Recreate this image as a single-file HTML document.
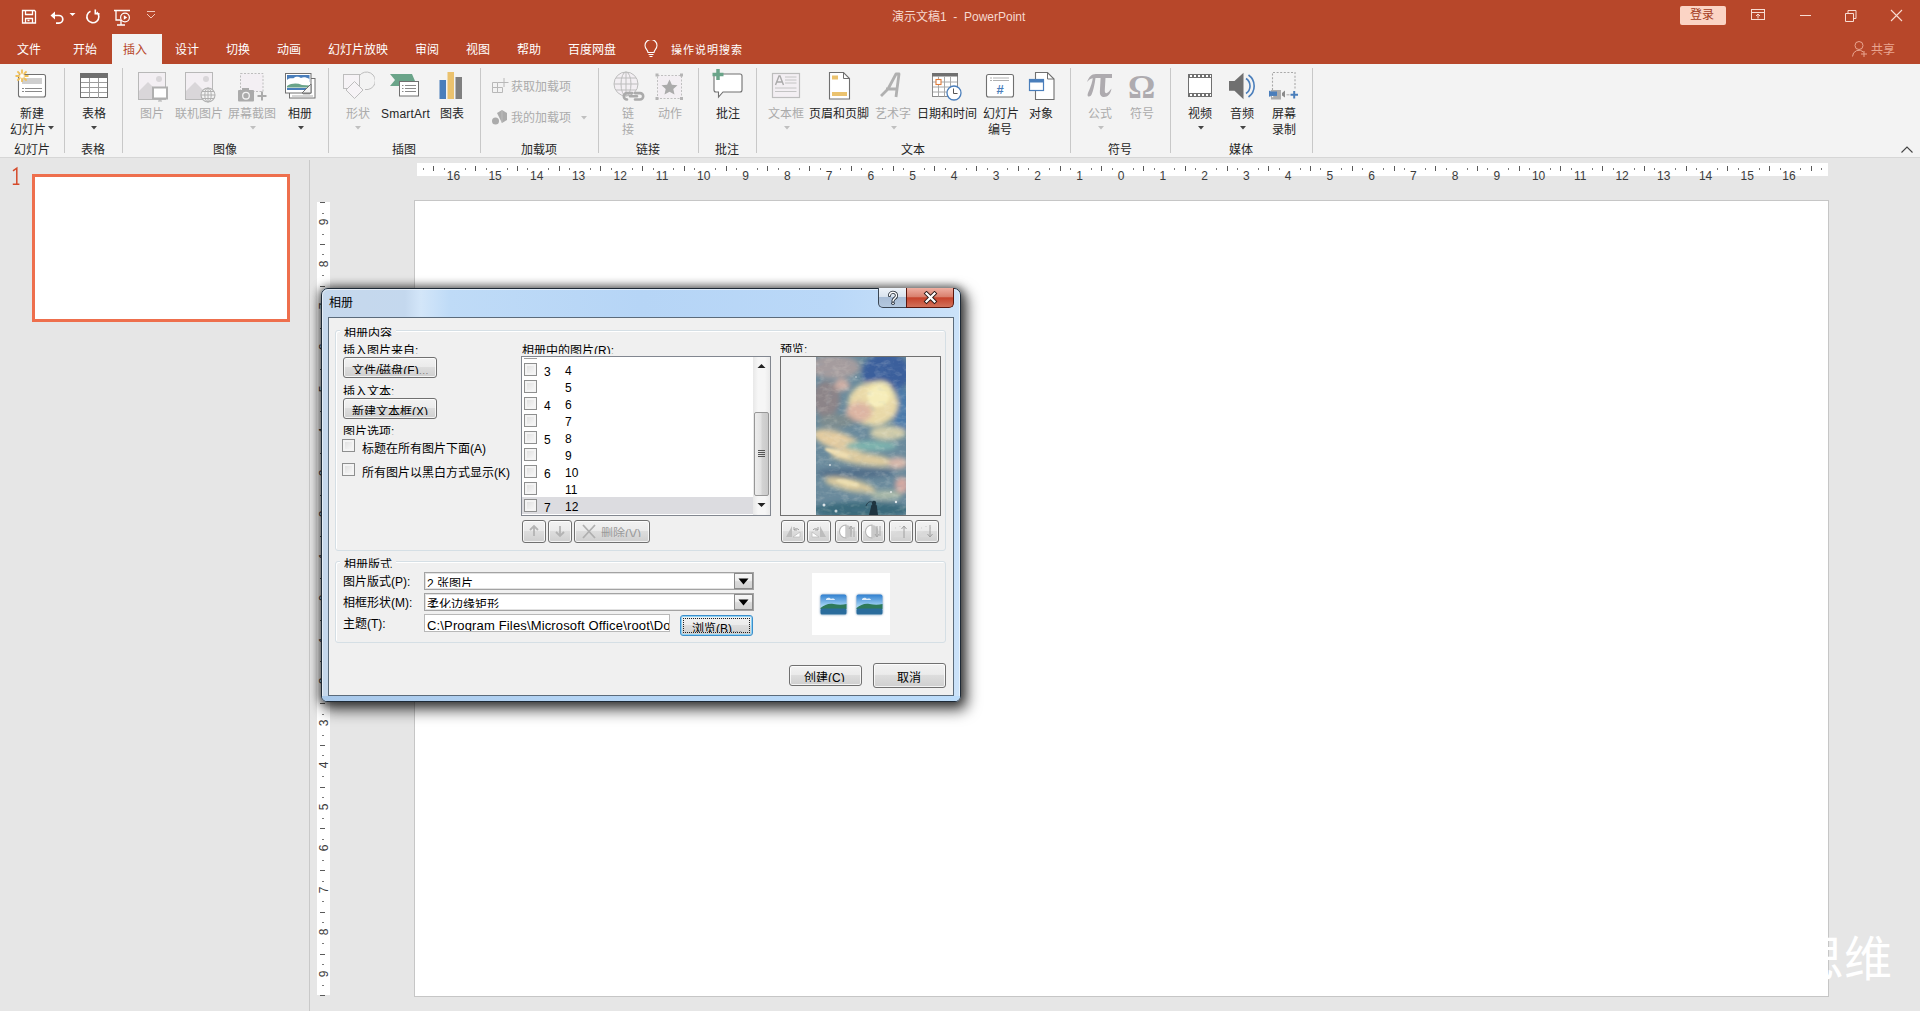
<!DOCTYPE html><html lang="zh-CN"><head><meta charset="utf-8"><style>
html,body{margin:0;padding:0;width:1920px;height:1011px;overflow:hidden;background:#E6E6E6;font-family:"Liberation Sans",sans-serif}
.t{position:absolute;white-space:nowrap}
.r{position:absolute;box-sizing:border-box}
</style></head><body>
<div class="r" style="left:0px;top:0px;width:1920px;height:64px;background:#B7472A"></div>
<svg class="r" style="left:20px;top:8px;" width="18" height="18" viewBox="0 0 18 18"><path d="M2.5 2.5h12l1 1v11.5h-13z M5.5 2.5v4h7v-4 M5.5 15v-4.5h7v4.5 M7.5 12.5h2" fill="none" stroke="#fff" stroke-width="1.3"/></svg>
<svg class="r" style="left:49px;top:8px;" width="18" height="18" viewBox="0 0 18 18"><path d="M5 7.5h5a3.8 3.8 0 0 1 0 7.6h-3" fill="none" stroke="#fff" stroke-width="1.7"/><path d="M1.5 7.5l4.5-4v8z" fill="#fff"/></svg>
<svg class="r" style="left:69px;top:12px;" width="8" height="6" viewBox="0 0 8 6"><path d="M0.5 1h6l-3 3z" fill="#fff"/></svg>
<svg class="r" style="left:84px;top:8px;" width="18" height="18" viewBox="0 0 18 18"><path d="M6.5 3.2A6 6 0 1 0 12.8 4.2" fill="none" stroke="#fff" stroke-width="1.6"/><path d="M11.3 1.6v4.2h4.2" fill="none" stroke="#fff" stroke-width="1.6"/></svg>
<svg class="r" style="left:112px;top:8px;" width="20" height="19" viewBox="0 0 20 19"><path d="M2 2.5h16 M4 2.5v9.5h4.5 M9 12v4.5 M5 17h8" fill="none" stroke="#fff" stroke-width="1.3"/><circle cx="13" cy="9.5" r="4.4" fill="#B7472A" stroke="#fff" stroke-width="1.2"/><path d="M11.8 7.2v4.6l3.4-2.3z" fill="#fff"/></svg>
<svg class="r" style="left:145px;top:10px;" width="12" height="10" viewBox="0 0 12 10"><path d="M2 1.5h8 M2 4l4 4 4-4" fill="none" stroke="#F0C8BC" stroke-width="1"/></svg>
<div class="t " style="left:892px;top:11px;font-size:12px;line-height:12px;color:#F6D9CF;">演示文稿1&nbsp;&nbsp;-&nbsp;&nbsp;PowerPoint</div>
<div class="r" style="left:1680px;top:6px;width:46px;height:19px;background:#FBD4C5;border-radius:2px"></div>
<div class="t " style="left:1690px;top:9px;font-size:12px;line-height:12px;color:#A33B22;">登录</div>
<svg class="r" style="left:1750px;top:8px;" width="17" height="14" viewBox="0 0 17 14"><rect x="1.5" y="1.5" width="13" height="10" fill="none" stroke="#F8DCD2" stroke-width="1"/><path d="M1.5 4.5h13 M8 10.5v-4 M6 8l2-2 2 2" fill="none" stroke="#F8DCD2" stroke-width="1"/></svg>
<div class="r" style="left:1800px;top:15px;width:11px;height:1px;background:#F8DCD2"></div>
<svg class="r" style="left:1844px;top:9px;" width="14" height="13" viewBox="0 0 14 13"><path d="M1.5 4.5h8v8h-8z M4 4.5v-3h8v8h-2.5" fill="none" stroke="#F8DCD2" stroke-width="1"/></svg>
<svg class="r" style="left:1890px;top:9px;" width="13" height="13" viewBox="0 0 13 13"><path d="M1 1l11 11 M12 1l-11 11" fill="none" stroke="#F8DCD2" stroke-width="1.1"/></svg>
<svg class="r" style="left:1851px;top:40px;" width="18" height="18" viewBox="0 0 18 18"><circle cx="8" cy="5.5" r="4" fill="none" stroke="#E9A590" stroke-width="1"/><path d="M1.5 16.5a6.5 6.5 0 0 1 11-4.5 M13 11v6 M10 14h6" fill="none" stroke="#E9A590" stroke-width="1"/></svg>
<div class="t " style="left:1871px;top:44px;font-size:12px;line-height:12px;color:#E9A590;">共享</div>
<div class="r" style="left:112px;top:34px;width:50px;height:30px;background:#F3F3F3"></div>
<div class="t " style="left:17px;top:44px;font-size:12px;line-height:12px;color:#FFFFFF;">文件</div>
<div class="t " style="left:73px;top:44px;font-size:12px;line-height:12px;color:#FFFFFF;">开始</div>
<div class="t " style="left:175px;top:44px;font-size:12px;line-height:12px;color:#FFFFFF;">设计</div>
<div class="t " style="left:226px;top:44px;font-size:12px;line-height:12px;color:#FFFFFF;">切换</div>
<div class="t " style="left:277px;top:44px;font-size:12px;line-height:12px;color:#FFFFFF;">动画</div>
<div class="t " style="left:328px;top:44px;font-size:12px;line-height:12px;color:#FFFFFF;">幻灯片放映</div>
<div class="t " style="left:415px;top:44px;font-size:12px;line-height:12px;color:#FFFFFF;">审阅</div>
<div class="t " style="left:466px;top:44px;font-size:12px;line-height:12px;color:#FFFFFF;">视图</div>
<div class="t " style="left:517px;top:44px;font-size:12px;line-height:12px;color:#FFFFFF;">帮助</div>
<div class="t " style="left:568px;top:44px;font-size:12px;line-height:12px;color:#FFFFFF;">百度网盘</div>
<div class="t " style="left:123px;top:44px;font-size:12px;line-height:12px;color:#B7472A;">插入</div>
<svg class="r" style="left:643px;top:40px;" width="16" height="18" viewBox="0 0 16 18"><path d="M5 12.5c0-2.5-3-3.5-3-7a6 6 0 0 1 12 0c0 3.5-3 4.5-3 7z M5.5 14.5h5 M6.5 16.5h3" fill="none" stroke="#fff" stroke-width="1.1"/></svg>
<div class="t " style="left:671px;top:45px;font-size:11px;line-height:11px;color:#FFFFFF;letter-spacing:1px">操作说明搜索</div>
<div class="r" style="left:0px;top:64px;width:1920px;height:93px;background:#F3F3F3"></div>
<div class="r" style="left:0px;top:157px;width:1920px;height:1px;background:#D6D6D6"></div>
<div class="r" style="left:64px;top:68px;width:1px;height:85px;background:#C8C8C8"></div>
<div class="r" style="left:122px;top:68px;width:1px;height:85px;background:#C8C8C8"></div>
<div class="r" style="left:328px;top:68px;width:1px;height:85px;background:#C8C8C8"></div>
<div class="r" style="left:480px;top:68px;width:1px;height:85px;background:#C8C8C8"></div>
<div class="r" style="left:598px;top:68px;width:1px;height:85px;background:#C8C8C8"></div>
<div class="r" style="left:698px;top:68px;width:1px;height:85px;background:#C8C8C8"></div>
<div class="r" style="left:756px;top:68px;width:1px;height:85px;background:#C8C8C8"></div>
<div class="r" style="left:1070px;top:68px;width:1px;height:85px;background:#C8C8C8"></div>
<div class="r" style="left:1170px;top:68px;width:1px;height:85px;background:#C8C8C8"></div>
<div class="r" style="left:1312px;top:68px;width:1px;height:85px;background:#C8C8C8"></div>
<div class="t" style="left:-68.0px;width:200px;text-align:center;top:144px;font-size:12px;line-height:12px;color:#262626;">幻灯片</div>
<div class="t" style="left:-7.0px;width:200px;text-align:center;top:144px;font-size:12px;line-height:12px;color:#262626;">表格</div>
<div class="t" style="left:125.0px;width:200px;text-align:center;top:144px;font-size:12px;line-height:12px;color:#262626;">图像</div>
<div class="t" style="left:304.0px;width:200px;text-align:center;top:144px;font-size:12px;line-height:12px;color:#262626;">插图</div>
<div class="t" style="left:439.0px;width:200px;text-align:center;top:144px;font-size:12px;line-height:12px;color:#262626;">加载项</div>
<div class="t" style="left:548.0px;width:200px;text-align:center;top:144px;font-size:12px;line-height:12px;color:#262626;">链接</div>
<div class="t" style="left:627.0px;width:200px;text-align:center;top:144px;font-size:12px;line-height:12px;color:#262626;">批注</div>
<div class="t" style="left:813.0px;width:200px;text-align:center;top:144px;font-size:12px;line-height:12px;color:#262626;">文本</div>
<div class="t" style="left:1020.0px;width:200px;text-align:center;top:144px;font-size:12px;line-height:12px;color:#262626;">符号</div>
<div class="t" style="left:1141.0px;width:200px;text-align:center;top:144px;font-size:12px;line-height:12px;color:#262626;">媒体</div>
<svg class="r" style="left:1900px;top:145px;" width="14" height="9" viewBox="0 0 14 9"><path d="M1.5 7.5l5.5-5.5 5.5 5.5" fill="none" stroke="#444" stroke-width="1.1"/></svg>
<svg class="r" style="left:14px;top:68px;" width="34" height="32" viewBox="0 0 34 32">
<rect x="4.5" y="6.5" width="27" height="22.5" rx="2" fill="#fff" stroke="#707070" stroke-width="1.1"/>
<rect x="8" y="10" width="20" height="6" fill="#CFCFCF"/>
<path d="M8 20.5h2 M11 20.5h17 M8 23.5h2 M11 23.5h17" stroke="#8A8A8A" stroke-width="1"/>
<g stroke="#F0C05A" stroke-width="1.8"><path d="M8 1.5v4 M8 10v4 M1.5 8h4 M10.5 8h4 M3.4 3.4l2.6 2.6 M10 10l2.6 2.6 M12.6 3.4l-2.6 2.6 M6 10l-2.6 2.6"/></g>
<circle cx="8" cy="8" r="2.4" fill="#fff" stroke="#F0C05A" stroke-width="0.6"/>
</svg>
<div class="t " style="left:20px;top:108px;font-size:12px;line-height:12px;color:#262626;">新建</div>
<div class="t " style="left:10px;top:124px;font-size:12px;line-height:12px;color:#262626;">幻灯片</div>
<svg class="r" style="left:48px;top:126px;" width="6" height="4" viewBox="0 0 6 4"><path d="M0 0h6l-3 3.5z" fill="#444"/></svg>
<svg class="r" style="left:79px;top:72px;" width="30" height="28" viewBox="0 0 30 28">
<rect x="1.5" y="1.5" width="27" height="24" fill="#fff" stroke="#6F6F6F" stroke-width="1"/>
<rect x="1" y="1" width="28" height="5" fill="#6F6F6F"/>
<path d="M10.5 6v20 M19.5 6v20 M2 10.5h26 M2 15.5h26 M2 20.5h26" stroke="#9C9C9C" stroke-width="1"/>
</svg>
<div class="t " style="left:82px;top:108px;font-size:12px;line-height:12px;color:#262626;">表格</div>
<svg class="r" style="left:91px;top:126px;" width="6" height="4" viewBox="0 0 6 4"><path d="M0 0h6l-3 3.5z" fill="#444"/></svg>
<svg class="r" style="left:136px;top:70px;" width="34" height="34" viewBox="0 0 34 34">
<rect x="2.5" y="2.5" width="27" height="27" fill="#F3EFF3" stroke="#B8B8B8" stroke-width="1"/>
<path d="M3 29v-8l9-9 9 9v8z" fill="#D9D6D9"/>
<circle cx="23" cy="9" r="3" fill="#D9D6D9"/>
<rect x="17" y="17.5" width="14" height="11" fill="#fff" stroke="#B0B0B0" stroke-width="2"/>
<path d="M22 31h4 M24 29v2" stroke="#B0B0B0" stroke-width="1"/>
</svg>
<svg class="r" style="left:183px;top:70px;" width="36" height="34" viewBox="0 0 36 34">
<rect x="2.5" y="2.5" width="27" height="27" fill="#F3EFF3" stroke="#B8B8B8" stroke-width="1"/>
<path d="M3 29v-8l9-9 9 9v8z" fill="#D9D6D9"/>
<circle cx="23" cy="9" r="3" fill="#D9D6D9"/>
<circle cx="25" cy="25" r="7" fill="#F3F3F3" stroke="#B0B0B0" stroke-width="1.1"/>
<path d="M18 25h14 M19 21.5h12 M19 28.5h12 M25 18v14" stroke="#B0B0B0" stroke-width="1"/>
<ellipse cx="25" cy="25" rx="3.2" ry="7" fill="none" stroke="#B0B0B0" stroke-width="1"/>
</svg>
<svg class="r" style="left:236px;top:71px;" width="32" height="32" viewBox="0 0 32 32">
<rect x="4.5" y="2.5" width="22.5" height="18" fill="#F3EFF3" stroke="#BDBDBD" stroke-width="1" stroke-dasharray="2,1.5"/>
<rect x="2" y="19" width="16" height="11.5" rx="1" fill="#ABABAB"/>
<rect x="6" y="17" width="7" height="3" fill="#ABABAB"/>
<circle cx="10" cy="24.7" r="3.3" fill="#ABABAB" stroke="#F3F3F3" stroke-width="1.3"/>
<path d="M21.5 25h9 M26 20.5v9" stroke="#ABABAB" stroke-width="2"/>
</svg>
<svg class="r" style="left:284px;top:72px;" width="33" height="28" viewBox="0 0 33 28">
<rect x="5.5" y="6.5" width="25.5" height="19.5" fill="#fff" stroke="#707070" stroke-width="1"/>
<path d="M8 24h21 M26 22v-10l-7 10z" fill="#ABABAB" stroke="#ABABAB" stroke-width="1"/>
<rect x="1.5" y="1.5" width="25.5" height="19.5" fill="#fff" stroke="#707070" stroke-width="1"/>
<rect x="3" y="3" width="22.5" height="7" fill="#4A7EBB"/>
<path d="M3 8c3-3 5-1 7-2 2-2 5-1 7 0 2-1 5-1 8.5 1v3h-22.5z" fill="#fff"/>
<path d="M3 14c5-3 10-3 15-1l7.5 0.5v2h-22.5z" fill="#6AA489"/>
<rect x="3" y="16" width="22.5" height="2" fill="#4A7EBB"/>
<path d="M18 21l9-9v9z" fill="#F3F3F3" stroke="#707070" stroke-width="1"/>
</svg>
<div class="t " style="left:140px;top:108px;font-size:12px;line-height:12px;color:#ABABAB;">图片</div>
<div class="t " style="left:175px;top:108px;font-size:12px;line-height:12px;color:#ABABAB;">联机图片</div>
<div class="t " style="left:228px;top:108px;font-size:12px;line-height:12px;color:#ABABAB;">屏幕截图</div>
<div class="t " style="left:288px;top:108px;font-size:12px;line-height:12px;color:#262626;">相册</div>
<svg class="r" style="left:250px;top:126px;" width="6" height="4" viewBox="0 0 6 4"><path d="M0 0h6l-3 3.5z" fill="#C0C0C0"/></svg>
<svg class="r" style="left:298px;top:126px;" width="6" height="4" viewBox="0 0 6 4"><path d="M0 0h6l-3 3.5z" fill="#444"/></svg>
<svg class="r" style="left:341px;top:69px;" width="34" height="33" viewBox="0 0 34 33">
<rect x="2.5" y="5.5" width="16" height="14" fill="#F6F3F6" stroke="#BDBDBD" stroke-width="1"/>
<path d="M18.5 6.5A8.8 8.8 0 1 1 24 20.5" fill="none" stroke="#BDBDBD" stroke-width="1"/>
<path d="M13.5 12.5l8.5 8.5-8.5 8.5-8.5-8.5z" fill="#F6F3F6" stroke="#BDBDBD" stroke-width="1"/>
</svg>
<div class="t " style="left:346px;top:108px;font-size:12px;line-height:12px;color:#ABABAB;">形状</div>
<svg class="r" style="left:355px;top:126px;" width="6" height="4" viewBox="0 0 6 4"><path d="M0 0h6l-3 3.5z" fill="#C0C0C0"/></svg>
<svg class="r" style="left:389px;top:73px;" width="33" height="26" viewBox="0 0 33 26">
<path d="M1 1h22l3 7h-4v5h-21l5-6z" fill="#6AA489"/>
<rect x="10.5" y="8.5" width="19" height="14.5" fill="#fff" stroke="#707070" stroke-width="1"/>
<path d="M13 12.5h1.5 M16 12.5h11 M13 15.5h1.5 M16 15.5h11 M13 18.5h1.5 M16 18.5h11" stroke="#8A8A8A" stroke-width="1"/>
</svg>
<div class="t " style="left:381px;top:108px;font-size:12px;line-height:12px;color:#262626;letter-spacing:0.2px">SmartArt</div>
<svg class="r" style="left:439px;top:72px;" width="25" height="28" viewBox="0 0 25 28">
<rect x="0.5" y="8" width="6.5" height="19" fill="#4A7EBB"/>
<rect x="8.5" y="0" width="6.5" height="27" fill="#EBC26E"/>
<rect x="16.5" y="5" width="6.5" height="22" fill="#7F7F7F"/>
</svg>
<div class="t " style="left:440px;top:108px;font-size:12px;line-height:12px;color:#262626;">图表</div>
<svg class="r" style="left:491px;top:77px;" width="18" height="18" viewBox="0 0 18 18">
<path d="M1.5 5.5h5v5h-5z M6.5 10.5h5v5h-5z M1.5 10.5h5v5h-5z M6.5 5.5h5" fill="none" stroke="#B8B8B8" stroke-width="1"/>
<path d="M13 1v9 M8.5 5.5h9" stroke="#B8B8B8" stroke-width="1"/>
</svg>
<div class="t " style="left:511px;top:81px;font-size:12px;line-height:12px;color:#ABABAB;">获取加载项</div>
<svg class="r" style="left:491px;top:109px;" width="18" height="16" viewBox="0 0 18 16">
<path d="M6 4l5-3 5 3v7l-5 3z" fill="#ABABAB"/>
<path d="M11 1v13" stroke="#C2C2C2" stroke-width="0.8"/>
<circle cx="4.5" cy="12" r="3.5" fill="#ABABAB"/>
</svg>
<div class="t " style="left:511px;top:112px;font-size:12px;line-height:12px;color:#ABABAB;">我的加载项</div>
<svg class="r" style="left:581px;top:116px;" width="6" height="4" viewBox="0 0 6 4"><path d="M0 0h6l-3 3.5z" fill="#C0C0C0"/></svg>
<svg class="r" style="left:611px;top:70px;" width="34" height="34" viewBox="0 0 34 34">
<circle cx="15" cy="14" r="12" fill="#F3EFF3" stroke="#BDBDBD" stroke-width="1"/>
<ellipse cx="15" cy="14" rx="5" ry="12" fill="none" stroke="#BDBDBD" stroke-width="1"/>
<path d="M3 14h24 M5 8h20 M5 20h20 M15 2v24" stroke="#BDBDBD" stroke-width="1"/>
<path d="M16 29.5a3.2 3.2 0 0 1 0-6.4h5 M24 23.1h5a3.2 3.2 0 0 1 0 6.4h-5 M19 26.3h7" fill="none" stroke="#ABABAB" stroke-width="2.6" stroke-linecap="round"/>
</svg>
<div class="t " style="left:622px;top:108px;font-size:12px;line-height:12px;color:#ABABAB;">链</div>
<div class="t " style="left:622px;top:124px;font-size:12px;line-height:12px;color:#ABABAB;">接</div>
<svg class="r" style="left:654px;top:72px;" width="31" height="29" viewBox="0 0 31 29">
<rect x="3.5" y="3.5" width="24" height="23" fill="#F3EFF3" stroke="#C0C0C0" stroke-width="1" stroke-dasharray="2,1.5"/>
<rect x="1.5" y="1.5" width="3" height="3" fill="#B5B5B5"/><rect x="26" y="1.5" width="3" height="3" fill="#B5B5B5"/>
<rect x="1.5" y="25" width="3" height="3" fill="#B5B5B5"/><rect x="26" y="25" width="3" height="3" fill="#B5B5B5"/>
<path d="M15.5 7.5l2.4 5.2 5.6 0.6-4.2 3.8 1.2 5.5-5-2.9-5 2.9 1.2-5.5-4.2-3.8 5.6-0.6z" fill="#ABABAB"/>
</svg>
<div class="t " style="left:658px;top:108px;font-size:12px;line-height:12px;color:#ABABAB;">动作</div>
<svg class="r" style="left:710px;top:68px;" width="34" height="34" viewBox="0 0 34 34">
<path d="M4 6h26a2 2 0 0 1 2 2v14a2 2 0 0 1-2 2h-17l-4.5 5v-5h-2.5a2 2 0 0 1-2-2v-14a2 2 0 0 1 2-2z" fill="#fff" stroke="#707070" stroke-width="1.1"/>
<path d="M8 1v11 M2.5 6.5h11" stroke="#6AA489" stroke-width="3.5"/>
</svg>
<div class="t " style="left:716px;top:108px;font-size:12px;line-height:12px;color:#262626;">批注</div>
<svg class="r" style="left:771px;top:72px;" width="31" height="28" viewBox="0 0 31 28">
<rect x="1.5" y="1.5" width="27" height="24" fill="#F3EFF3" stroke="#BDBDBD" stroke-width="1.2"/>
<path d="M4.5 13l3.5-9h1l3.5 9 M6 10h5" fill="none" stroke="#ABABAB" stroke-width="1.4"/>
<path d="M14 5h11.5 M14 8h11.5 M14 11h11.5 M4 16h21.5 M4 19.5h21.5" stroke="#C4C4C4" stroke-width="1"/>
</svg>
<div class="t " style="left:768px;top:108px;font-size:12px;line-height:12px;color:#ABABAB;">文本框</div>
<svg class="r" style="left:784px;top:126px;" width="6" height="4" viewBox="0 0 6 4"><path d="M0 0h6l-3 3.5z" fill="#C0C0C0"/></svg>
<svg class="r" style="left:828px;top:71px;" width="24" height="30" viewBox="0 0 24 30">
<path d="M1.5 1.5h14l6 6v20.5h-20z" fill="#fff" stroke="#707070" stroke-width="1.1"/>
<path d="M15.5 1.5v6h6" fill="none" stroke="#707070" stroke-width="1"/>
<rect x="4" y="4.5" width="6" height="4" fill="#EBC26E"/>
<rect x="4" y="21" width="15" height="4" fill="#EBC26E"/>
</svg>
<div class="t " style="left:809px;top:108px;font-size:12px;line-height:12px;color:#262626;">页眉和页脚</div>
<svg class="r" style="left:878px;top:72px;" width="25" height="28" viewBox="0 0 25 28"><path d="M3 24c2-2 4-4 7-7l8-15h3l-2 15 -1 8 M8 17h10" fill="none" stroke="#B0B0B0" stroke-width="2.8" stroke-linejoin="round"/></svg>
<div class="t " style="left:875px;top:108px;font-size:12px;line-height:12px;color:#ABABAB;">艺术字</div>
<svg class="r" style="left:891px;top:126px;" width="6" height="4" viewBox="0 0 6 4"><path d="M0 0h6l-3 3.5z" fill="#C0C0C0"/></svg>
<svg class="r" style="left:931px;top:72px;" width="32" height="30" viewBox="0 0 32 30">
<rect x="1.5" y="1.5" width="25" height="23" fill="#fff" stroke="#8A8A8A" stroke-width="1"/>
<rect x="1" y="1" width="26" height="3.5" fill="#707070"/>
<path d="M7.5 4.5v20 M13.5 4.5v20 M19.5 4.5v20 M2 10h24 M2 15h24 M2 20h24" stroke="#A8A8A8" stroke-width="1"/>
<rect x="5" y="7.5" width="5" height="5" fill="#fff" stroke="#E07B39" stroke-width="1.1"/>
<circle cx="23" cy="21" r="7" fill="#fff" stroke="#4A7EBB" stroke-width="1.3"/>
<path d="M22.5 16.5v5h4" fill="none" stroke="#555" stroke-width="1"/>
</svg>
<div class="t " style="left:917px;top:108px;font-size:12px;line-height:12px;color:#262626;">日期和时间</div>
<svg class="r" style="left:985px;top:73px;" width="30" height="26" viewBox="0 0 30 26">
<rect x="1.5" y="1.5" width="27" height="22.5" rx="2" fill="#fff" stroke="#707070" stroke-width="1.1"/>
<path d="M5 5h2 M8 5h16 M5 7.5h2 M8 7.5h16" stroke="#A8A8A8" stroke-width="0.9"/>
<text x="15" y="21" text-anchor="middle" font-family="Liberation Sans" font-weight="bold" font-size="13" fill="#4A7EBB">#</text>
</svg>
<div class="t " style="left:983px;top:108px;font-size:12px;line-height:12px;color:#262626;">幻灯片</div>
<div class="t " style="left:988px;top:124px;font-size:12px;line-height:12px;color:#262626;">编号</div>
<svg class="r" style="left:1027px;top:71px;" width="30" height="31" viewBox="0 0 30 31">
<path d="M8.5 1.5h12l6.5 6.5v20.5h-18.5z" fill="#fff" stroke="#707070" stroke-width="1.1"/>
<path d="M20.5 1.5v6.5h6.5" fill="none" stroke="#707070" stroke-width="1"/>
<rect x="2.5" y="8.5" width="14" height="11" fill="#fff" stroke="#4A7EBB" stroke-width="1.2"/>
<rect x="2" y="8" width="15" height="3.5" fill="#4A7EBB"/>
</svg>
<div class="t " style="left:1029px;top:108px;font-size:12px;line-height:12px;color:#262626;">对象</div>
<svg class="r" style="left:1085px;top:72px;" width="29" height="28" viewBox="0 0 29 28"><path d="M2 10C4 5 6 2 11 2L27 2L27 6L20.5 6L19.8 18C19.6 21.5 21.5 22 23.5 20L26.5 16.5C25.8 21.5 22.8 25 19 25C15.8 25 14.6 22.6 14.9 19L15.6 6L10.5 6C9.6 13 8.2 19 6.6 22.6C5.6 25.2 2.2 25.4 2.6 22.4C3.2 19.6 6.6 14 7.8 6.2C5.4 6.4 3.6 8 2 10Z" fill="#AEABAF"/></svg>
<div class="t " style="left:1088px;top:108px;font-size:12px;line-height:12px;color:#ABABAB;">公式</div>
<svg class="r" style="left:1098px;top:126px;" width="6" height="4" viewBox="0 0 6 4"><path d="M0 0h6l-3 3.5z" fill="#C0C0C0"/></svg>
<svg class="r" style="left:1126px;top:70px;" width="31" height="31" viewBox="0 0 31 31"><text x="15.5" y="28" text-anchor="middle" font-family="Liberation Serif" font-weight="bold" font-size="34" fill="#AEABAF">Ω</text></svg>
<div class="t " style="left:1130px;top:108px;font-size:12px;line-height:12px;color:#ABABAB;">符号</div>
<svg class="r" style="left:1187px;top:73px;" width="26" height="26" viewBox="0 0 26 26">
<rect x="1" y="1" width="24" height="23" fill="#707070"/>
<rect x="2" y="5" width="22" height="15" fill="#fff"/>
<path d="M3 3h2 M7 3h2 M11 3h2 M15 3h2 M19 3h2 M23 3h1 M3 22h2 M7 22h2 M11 22h2 M15 22h2 M19 22h2 M23 22h1" stroke="#fff" stroke-width="2"/>
</svg>
<div class="t " style="left:1188px;top:108px;font-size:12px;line-height:12px;color:#262626;">视频</div>
<svg class="r" style="left:1198px;top:126px;" width="6" height="4" viewBox="0 0 6 4"><path d="M0 0h6l-3 3.5z" fill="#444"/></svg>
<svg class="r" style="left:1227px;top:71px;" width="30" height="30" viewBox="0 0 30 30">
<path d="M2 10h5.5l9-8.2v26.4l-9-8.5h-5.5z" fill="#707070"/>
<path d="M19 7.5a9 9 0 0 1 0 15 M21.5 4a13.5 13.5 0 0 1 0 22" fill="none" stroke="#4A7EBB" stroke-width="1.6"/>
</svg>
<div class="t " style="left:1230px;top:108px;font-size:12px;line-height:12px;color:#262626;">音频</div>
<svg class="r" style="left:1240px;top:126px;" width="6" height="4" viewBox="0 0 6 4"><path d="M0 0h6l-3 3.5z" fill="#444"/></svg>
<svg class="r" style="left:1267px;top:70px;" width="33" height="32" viewBox="0 0 33 32">
<path d="M5.5 20V2.5h22.5V20" fill="none" stroke="#A8A8A8" stroke-width="1.1" stroke-dasharray="2,1.6"/>
<rect x="4" y="20" width="10" height="9.5" fill="#ABABAB"/>
<rect x="5" y="26" width="1.2" height="1.2" fill="#fff"/>
<path d="M15 23l3-2.5v7l-3-2z" fill="#8A8A8A"/>
<rect x="2" y="21.5" width="8" height="4.4" fill="#4A7EBB"/><rect x="2" y="20.8" width="1.5" height="5.8" fill="#4A7EBB"/>
<path d="M19.5 24.8h3" stroke="#A8A8A8" stroke-width="1"/>
<path d="M23.5 24.8h7.5 M27.2 21v7.5" stroke="#4A7EBB" stroke-width="2"/>
</svg>
<div class="t " style="left:1272px;top:108px;font-size:12px;line-height:12px;color:#262626;">屏幕</div>
<div class="t " style="left:1272px;top:124px;font-size:12px;line-height:12px;color:#262626;">录制</div>
<div class="r" style="left:309px;top:160px;width:1px;height:851px;background:#C9C9C9"></div>
<svg class="r" style="left:10px;top:165px;" width="14" height="22" viewBox="0 0 14 22"><path d="M3 5.8L6.8 3.2V19.2 M2.8 19.2h6.6" fill="none" stroke="#D54A2A" stroke-width="1.5"/></svg>
<div class="r" style="left:32px;top:174px;width:258px;height:148px;border:3px solid #EE6F4D;background:#fff"></div>
<div class="r" style="left:417px;top:163px;width:1411px;height:13px;background:#fff"></div>
<div class="r" style="left:317px;top:202px;width:13px;height:793px;background:#fff"></div>
<div class="r" style="left:414px;top:200px;width:1415px;height:797px;background:#fff;border:1px solid #C6C6C6"></div>
<div class="t " style="left:1796px;top:936px;font-size:48px;line-height:48px;color:#FFFFFF;">思维</div>
<div class="r" style="left:423px;top:168px;width:1px;height:2px;background:#7A7A7A"></div><div class="r" style="left:433px;top:166px;width:1px;height:5px;background:#5A5A5A"></div><div class="r" style="left:444px;top:168px;width:1px;height:2px;background:#7A7A7A"></div><div class="t" style="left:438.4px;width:30px;text-align:center;top:170px;font-size:12px;line-height:12px;color:#3C3C3C">16</div><div class="r" style="left:465px;top:168px;width:1px;height:2px;background:#7A7A7A"></div><div class="r" style="left:475px;top:166px;width:1px;height:5px;background:#5A5A5A"></div><div class="r" style="left:486px;top:168px;width:1px;height:2px;background:#7A7A7A"></div><div class="t" style="left:480.1px;width:30px;text-align:center;top:170px;font-size:12px;line-height:12px;color:#3C3C3C">15</div><div class="r" style="left:507px;top:168px;width:1px;height:2px;background:#7A7A7A"></div><div class="r" style="left:517px;top:166px;width:1px;height:5px;background:#5A5A5A"></div><div class="r" style="left:527px;top:168px;width:1px;height:2px;background:#7A7A7A"></div><div class="t" style="left:521.8px;width:30px;text-align:center;top:170px;font-size:12px;line-height:12px;color:#3C3C3C">14</div><div class="r" style="left:548px;top:168px;width:1px;height:2px;background:#7A7A7A"></div><div class="r" style="left:559px;top:166px;width:1px;height:5px;background:#5A5A5A"></div><div class="r" style="left:569px;top:168px;width:1px;height:2px;background:#7A7A7A"></div><div class="t" style="left:563.6px;width:30px;text-align:center;top:170px;font-size:12px;line-height:12px;color:#3C3C3C">13</div><div class="r" style="left:590px;top:168px;width:1px;height:2px;background:#7A7A7A"></div><div class="r" style="left:600px;top:166px;width:1px;height:5px;background:#5A5A5A"></div><div class="r" style="left:611px;top:168px;width:1px;height:2px;background:#7A7A7A"></div><div class="t" style="left:605.3px;width:30px;text-align:center;top:170px;font-size:12px;line-height:12px;color:#3C3C3C">12</div><div class="r" style="left:632px;top:168px;width:1px;height:2px;background:#7A7A7A"></div><div class="r" style="left:642px;top:166px;width:1px;height:5px;background:#5A5A5A"></div><div class="r" style="left:653px;top:168px;width:1px;height:2px;background:#7A7A7A"></div><div class="t" style="left:647.1px;width:30px;text-align:center;top:170px;font-size:12px;line-height:12px;color:#3C3C3C">11</div><div class="r" style="left:673px;top:168px;width:1px;height:2px;background:#7A7A7A"></div><div class="r" style="left:684px;top:166px;width:1px;height:5px;background:#5A5A5A"></div><div class="r" style="left:694px;top:168px;width:1px;height:2px;background:#7A7A7A"></div><div class="t" style="left:688.8px;width:30px;text-align:center;top:170px;font-size:12px;line-height:12px;color:#3C3C3C">10</div><div class="r" style="left:715px;top:168px;width:1px;height:2px;background:#7A7A7A"></div><div class="r" style="left:726px;top:166px;width:1px;height:5px;background:#5A5A5A"></div><div class="r" style="left:736px;top:168px;width:1px;height:2px;background:#7A7A7A"></div><div class="t" style="left:730.5px;width:30px;text-align:center;top:170px;font-size:12px;line-height:12px;color:#3C3C3C">9</div><div class="r" style="left:757px;top:168px;width:1px;height:2px;background:#7A7A7A"></div><div class="r" style="left:767px;top:166px;width:1px;height:5px;background:#5A5A5A"></div><div class="r" style="left:778px;top:168px;width:1px;height:2px;background:#7A7A7A"></div><div class="t" style="left:772.3px;width:30px;text-align:center;top:170px;font-size:12px;line-height:12px;color:#3C3C3C">8</div><div class="r" style="left:799px;top:168px;width:1px;height:2px;background:#7A7A7A"></div><div class="r" style="left:809px;top:166px;width:1px;height:5px;background:#5A5A5A"></div><div class="r" style="left:820px;top:168px;width:1px;height:2px;background:#7A7A7A"></div><div class="t" style="left:814.0px;width:30px;text-align:center;top:170px;font-size:12px;line-height:12px;color:#3C3C3C">7</div><div class="r" style="left:840px;top:168px;width:1px;height:2px;background:#7A7A7A"></div><div class="r" style="left:851px;top:166px;width:1px;height:5px;background:#5A5A5A"></div><div class="r" style="left:861px;top:168px;width:1px;height:2px;background:#7A7A7A"></div><div class="t" style="left:855.8px;width:30px;text-align:center;top:170px;font-size:12px;line-height:12px;color:#3C3C3C">6</div><div class="r" style="left:882px;top:168px;width:1px;height:2px;background:#7A7A7A"></div><div class="r" style="left:893px;top:166px;width:1px;height:5px;background:#5A5A5A"></div><div class="r" style="left:903px;top:168px;width:1px;height:2px;background:#7A7A7A"></div><div class="t" style="left:897.5px;width:30px;text-align:center;top:170px;font-size:12px;line-height:12px;color:#3C3C3C">5</div><div class="r" style="left:924px;top:168px;width:1px;height:2px;background:#7A7A7A"></div><div class="r" style="left:934px;top:166px;width:1px;height:5px;background:#5A5A5A"></div><div class="r" style="left:945px;top:168px;width:1px;height:2px;background:#7A7A7A"></div><div class="t" style="left:939.2px;width:30px;text-align:center;top:170px;font-size:12px;line-height:12px;color:#3C3C3C">4</div><div class="r" style="left:966px;top:168px;width:1px;height:2px;background:#7A7A7A"></div><div class="r" style="left:976px;top:166px;width:1px;height:5px;background:#5A5A5A"></div><div class="r" style="left:987px;top:168px;width:1px;height:2px;background:#7A7A7A"></div><div class="t" style="left:981.0px;width:30px;text-align:center;top:170px;font-size:12px;line-height:12px;color:#3C3C3C">3</div><div class="r" style="left:1007px;top:168px;width:1px;height:2px;background:#7A7A7A"></div><div class="r" style="left:1018px;top:166px;width:1px;height:5px;background:#5A5A5A"></div><div class="r" style="left:1028px;top:168px;width:1px;height:2px;background:#7A7A7A"></div><div class="t" style="left:1022.7px;width:30px;text-align:center;top:170px;font-size:12px;line-height:12px;color:#3C3C3C">2</div><div class="r" style="left:1049px;top:168px;width:1px;height:2px;background:#7A7A7A"></div><div class="r" style="left:1060px;top:166px;width:1px;height:5px;background:#5A5A5A"></div><div class="r" style="left:1070px;top:168px;width:1px;height:2px;background:#7A7A7A"></div><div class="t" style="left:1064.5px;width:30px;text-align:center;top:170px;font-size:12px;line-height:12px;color:#3C3C3C">1</div><div class="r" style="left:1091px;top:168px;width:1px;height:2px;background:#7A7A7A"></div><div class="r" style="left:1101px;top:166px;width:1px;height:5px;background:#5A5A5A"></div><div class="r" style="left:1112px;top:168px;width:1px;height:2px;background:#7A7A7A"></div><div class="t" style="left:1106.2px;width:30px;text-align:center;top:170px;font-size:12px;line-height:12px;color:#3C3C3C">0</div><div class="r" style="left:1133px;top:168px;width:1px;height:2px;background:#7A7A7A"></div><div class="r" style="left:1143px;top:166px;width:1px;height:5px;background:#5A5A5A"></div><div class="r" style="left:1154px;top:168px;width:1px;height:2px;background:#7A7A7A"></div><div class="t" style="left:1147.9px;width:30px;text-align:center;top:170px;font-size:12px;line-height:12px;color:#3C3C3C">1</div><div class="r" style="left:1174px;top:168px;width:1px;height:2px;background:#7A7A7A"></div><div class="r" style="left:1185px;top:166px;width:1px;height:5px;background:#5A5A5A"></div><div class="r" style="left:1195px;top:168px;width:1px;height:2px;background:#7A7A7A"></div><div class="t" style="left:1189.7px;width:30px;text-align:center;top:170px;font-size:12px;line-height:12px;color:#3C3C3C">2</div><div class="r" style="left:1216px;top:168px;width:1px;height:2px;background:#7A7A7A"></div><div class="r" style="left:1227px;top:166px;width:1px;height:5px;background:#5A5A5A"></div><div class="r" style="left:1237px;top:168px;width:1px;height:2px;background:#7A7A7A"></div><div class="t" style="left:1231.4px;width:30px;text-align:center;top:170px;font-size:12px;line-height:12px;color:#3C3C3C">3</div><div class="r" style="left:1258px;top:168px;width:1px;height:2px;background:#7A7A7A"></div><div class="r" style="left:1268px;top:166px;width:1px;height:5px;background:#5A5A5A"></div><div class="r" style="left:1279px;top:168px;width:1px;height:2px;background:#7A7A7A"></div><div class="t" style="left:1273.2px;width:30px;text-align:center;top:170px;font-size:12px;line-height:12px;color:#3C3C3C">4</div><div class="r" style="left:1300px;top:168px;width:1px;height:2px;background:#7A7A7A"></div><div class="r" style="left:1310px;top:166px;width:1px;height:5px;background:#5A5A5A"></div><div class="r" style="left:1320px;top:168px;width:1px;height:2px;background:#7A7A7A"></div><div class="t" style="left:1314.9px;width:30px;text-align:center;top:170px;font-size:12px;line-height:12px;color:#3C3C3C">5</div><div class="r" style="left:1341px;top:168px;width:1px;height:2px;background:#7A7A7A"></div><div class="r" style="left:1352px;top:166px;width:1px;height:5px;background:#5A5A5A"></div><div class="r" style="left:1362px;top:168px;width:1px;height:2px;background:#7A7A7A"></div><div class="t" style="left:1356.6px;width:30px;text-align:center;top:170px;font-size:12px;line-height:12px;color:#3C3C3C">6</div><div class="r" style="left:1383px;top:168px;width:1px;height:2px;background:#7A7A7A"></div><div class="r" style="left:1394px;top:166px;width:1px;height:5px;background:#5A5A5A"></div><div class="r" style="left:1404px;top:168px;width:1px;height:2px;background:#7A7A7A"></div><div class="t" style="left:1398.4px;width:30px;text-align:center;top:170px;font-size:12px;line-height:12px;color:#3C3C3C">7</div><div class="r" style="left:1425px;top:168px;width:1px;height:2px;background:#7A7A7A"></div><div class="r" style="left:1435px;top:166px;width:1px;height:5px;background:#5A5A5A"></div><div class="r" style="left:1446px;top:168px;width:1px;height:2px;background:#7A7A7A"></div><div class="t" style="left:1440.1px;width:30px;text-align:center;top:170px;font-size:12px;line-height:12px;color:#3C3C3C">8</div><div class="r" style="left:1467px;top:168px;width:1px;height:2px;background:#7A7A7A"></div><div class="r" style="left:1477px;top:166px;width:1px;height:5px;background:#5A5A5A"></div><div class="r" style="left:1487px;top:168px;width:1px;height:2px;background:#7A7A7A"></div><div class="t" style="left:1481.9px;width:30px;text-align:center;top:170px;font-size:12px;line-height:12px;color:#3C3C3C">9</div><div class="r" style="left:1508px;top:168px;width:1px;height:2px;background:#7A7A7A"></div><div class="r" style="left:1519px;top:166px;width:1px;height:5px;background:#5A5A5A"></div><div class="r" style="left:1529px;top:168px;width:1px;height:2px;background:#7A7A7A"></div><div class="t" style="left:1523.6px;width:30px;text-align:center;top:170px;font-size:12px;line-height:12px;color:#3C3C3C">10</div><div class="r" style="left:1550px;top:168px;width:1px;height:2px;background:#7A7A7A"></div><div class="r" style="left:1560px;top:166px;width:1px;height:5px;background:#5A5A5A"></div><div class="r" style="left:1571px;top:168px;width:1px;height:2px;background:#7A7A7A"></div><div class="t" style="left:1565.3px;width:30px;text-align:center;top:170px;font-size:12px;line-height:12px;color:#3C3C3C">11</div><div class="r" style="left:1592px;top:168px;width:1px;height:2px;background:#7A7A7A"></div><div class="r" style="left:1602px;top:166px;width:1px;height:5px;background:#5A5A5A"></div><div class="r" style="left:1613px;top:168px;width:1px;height:2px;background:#7A7A7A"></div><div class="t" style="left:1607.1px;width:30px;text-align:center;top:170px;font-size:12px;line-height:12px;color:#3C3C3C">12</div><div class="r" style="left:1634px;top:168px;width:1px;height:2px;background:#7A7A7A"></div><div class="r" style="left:1644px;top:166px;width:1px;height:5px;background:#5A5A5A"></div><div class="r" style="left:1654px;top:168px;width:1px;height:2px;background:#7A7A7A"></div><div class="t" style="left:1648.8px;width:30px;text-align:center;top:170px;font-size:12px;line-height:12px;color:#3C3C3C">13</div><div class="r" style="left:1675px;top:168px;width:1px;height:2px;background:#7A7A7A"></div><div class="r" style="left:1686px;top:166px;width:1px;height:5px;background:#5A5A5A"></div><div class="r" style="left:1696px;top:168px;width:1px;height:2px;background:#7A7A7A"></div><div class="t" style="left:1690.6px;width:30px;text-align:center;top:170px;font-size:12px;line-height:12px;color:#3C3C3C">14</div><div class="r" style="left:1717px;top:168px;width:1px;height:2px;background:#7A7A7A"></div><div class="r" style="left:1727px;top:166px;width:1px;height:5px;background:#5A5A5A"></div><div class="r" style="left:1738px;top:168px;width:1px;height:2px;background:#7A7A7A"></div><div class="t" style="left:1732.3px;width:30px;text-align:center;top:170px;font-size:12px;line-height:12px;color:#3C3C3C">15</div><div class="r" style="left:1759px;top:168px;width:1px;height:2px;background:#7A7A7A"></div><div class="r" style="left:1769px;top:166px;width:1px;height:5px;background:#5A5A5A"></div><div class="r" style="left:1780px;top:168px;width:1px;height:2px;background:#7A7A7A"></div><div class="t" style="left:1774.0px;width:30px;text-align:center;top:170px;font-size:12px;line-height:12px;color:#3C3C3C">16</div><div class="r" style="left:1800px;top:168px;width:1px;height:2px;background:#7A7A7A"></div><div class="r" style="left:1811px;top:166px;width:1px;height:5px;background:#5A5A5A"></div><div class="r" style="left:1821px;top:168px;width:1px;height:2px;background:#7A7A7A"></div>
<div class="r" style="left:320px;top:202px;width:5px;height:1px;background:#5A5A5A"></div><div class="r" style="left:322px;top:213px;width:2px;height:1px;background:#7A7A7A"></div><div class="t" style="left:309px;width:30px;text-align:center;top:216.2px;font-size:12px;line-height:12px;color:#3C3C3C;transform:rotate(-90deg)">9</div><div class="r" style="left:322px;top:234px;width:2px;height:1px;background:#7A7A7A"></div><div class="r" style="left:320px;top:244px;width:5px;height:1px;background:#5A5A5A"></div><div class="r" style="left:322px;top:254px;width:2px;height:1px;background:#7A7A7A"></div><div class="t" style="left:309px;width:30px;text-align:center;top:257.9px;font-size:12px;line-height:12px;color:#3C3C3C;transform:rotate(-90deg)">8</div><div class="r" style="left:322px;top:275px;width:2px;height:1px;background:#7A7A7A"></div><div class="r" style="left:320px;top:286px;width:5px;height:1px;background:#5A5A5A"></div><div class="r" style="left:322px;top:296px;width:2px;height:1px;background:#7A7A7A"></div><div class="t" style="left:309px;width:30px;text-align:center;top:299.7px;font-size:12px;line-height:12px;color:#3C3C3C;transform:rotate(-90deg)">7</div><div class="r" style="left:322px;top:317px;width:2px;height:1px;background:#7A7A7A"></div><div class="r" style="left:320px;top:328px;width:5px;height:1px;background:#5A5A5A"></div><div class="r" style="left:322px;top:338px;width:2px;height:1px;background:#7A7A7A"></div><div class="t" style="left:309px;width:30px;text-align:center;top:341.4px;font-size:12px;line-height:12px;color:#3C3C3C;transform:rotate(-90deg)">6</div><div class="r" style="left:322px;top:359px;width:2px;height:1px;background:#7A7A7A"></div><div class="r" style="left:320px;top:369px;width:5px;height:1px;background:#5A5A5A"></div><div class="r" style="left:322px;top:380px;width:2px;height:1px;background:#7A7A7A"></div><div class="t" style="left:309px;width:30px;text-align:center;top:383.1px;font-size:12px;line-height:12px;color:#3C3C3C;transform:rotate(-90deg)">5</div><div class="r" style="left:322px;top:401px;width:2px;height:1px;background:#7A7A7A"></div><div class="r" style="left:320px;top:411px;width:5px;height:1px;background:#5A5A5A"></div><div class="r" style="left:322px;top:421px;width:2px;height:1px;background:#7A7A7A"></div><div class="t" style="left:309px;width:30px;text-align:center;top:424.9px;font-size:12px;line-height:12px;color:#3C3C3C;transform:rotate(-90deg)">4</div><div class="r" style="left:322px;top:442px;width:2px;height:1px;background:#7A7A7A"></div><div class="r" style="left:320px;top:453px;width:5px;height:1px;background:#5A5A5A"></div><div class="r" style="left:322px;top:463px;width:2px;height:1px;background:#7A7A7A"></div><div class="t" style="left:309px;width:30px;text-align:center;top:466.6px;font-size:12px;line-height:12px;color:#3C3C3C;transform:rotate(-90deg)">3</div><div class="r" style="left:322px;top:484px;width:2px;height:1px;background:#7A7A7A"></div><div class="r" style="left:320px;top:495px;width:5px;height:1px;background:#5A5A5A"></div><div class="r" style="left:322px;top:505px;width:2px;height:1px;background:#7A7A7A"></div><div class="t" style="left:309px;width:30px;text-align:center;top:508.4px;font-size:12px;line-height:12px;color:#3C3C3C;transform:rotate(-90deg)">2</div><div class="r" style="left:322px;top:526px;width:2px;height:1px;background:#7A7A7A"></div><div class="r" style="left:320px;top:536px;width:5px;height:1px;background:#5A5A5A"></div><div class="r" style="left:322px;top:547px;width:2px;height:1px;background:#7A7A7A"></div><div class="t" style="left:309px;width:30px;text-align:center;top:550.1px;font-size:12px;line-height:12px;color:#3C3C3C;transform:rotate(-90deg)">1</div><div class="r" style="left:322px;top:568px;width:2px;height:1px;background:#7A7A7A"></div><div class="r" style="left:320px;top:578px;width:5px;height:1px;background:#5A5A5A"></div><div class="r" style="left:322px;top:588px;width:2px;height:1px;background:#7A7A7A"></div><div class="t" style="left:309px;width:30px;text-align:center;top:591.9px;font-size:12px;line-height:12px;color:#3C3C3C;transform:rotate(-90deg)">0</div><div class="r" style="left:322px;top:609px;width:2px;height:1px;background:#7A7A7A"></div><div class="r" style="left:320px;top:620px;width:5px;height:1px;background:#5A5A5A"></div><div class="r" style="left:322px;top:630px;width:2px;height:1px;background:#7A7A7A"></div><div class="t" style="left:309px;width:30px;text-align:center;top:633.6px;font-size:12px;line-height:12px;color:#3C3C3C;transform:rotate(-90deg)">1</div><div class="r" style="left:322px;top:651px;width:2px;height:1px;background:#7A7A7A"></div><div class="r" style="left:320px;top:661px;width:5px;height:1px;background:#5A5A5A"></div><div class="r" style="left:322px;top:672px;width:2px;height:1px;background:#7A7A7A"></div><div class="t" style="left:309px;width:30px;text-align:center;top:675.3px;font-size:12px;line-height:12px;color:#3C3C3C;transform:rotate(-90deg)">2</div><div class="r" style="left:322px;top:693px;width:2px;height:1px;background:#7A7A7A"></div><div class="r" style="left:320px;top:703px;width:5px;height:1px;background:#5A5A5A"></div><div class="r" style="left:322px;top:714px;width:2px;height:1px;background:#7A7A7A"></div><div class="t" style="left:309px;width:30px;text-align:center;top:717.1px;font-size:12px;line-height:12px;color:#3C3C3C;transform:rotate(-90deg)">3</div><div class="r" style="left:322px;top:735px;width:2px;height:1px;background:#7A7A7A"></div><div class="r" style="left:320px;top:745px;width:5px;height:1px;background:#5A5A5A"></div><div class="r" style="left:322px;top:755px;width:2px;height:1px;background:#7A7A7A"></div><div class="t" style="left:309px;width:30px;text-align:center;top:758.8px;font-size:12px;line-height:12px;color:#3C3C3C;transform:rotate(-90deg)">4</div><div class="r" style="left:322px;top:776px;width:2px;height:1px;background:#7A7A7A"></div><div class="r" style="left:320px;top:787px;width:5px;height:1px;background:#5A5A5A"></div><div class="r" style="left:322px;top:797px;width:2px;height:1px;background:#7A7A7A"></div><div class="t" style="left:309px;width:30px;text-align:center;top:800.6px;font-size:12px;line-height:12px;color:#3C3C3C;transform:rotate(-90deg)">5</div><div class="r" style="left:322px;top:818px;width:2px;height:1px;background:#7A7A7A"></div><div class="r" style="left:320px;top:828px;width:5px;height:1px;background:#5A5A5A"></div><div class="r" style="left:322px;top:839px;width:2px;height:1px;background:#7A7A7A"></div><div class="t" style="left:309px;width:30px;text-align:center;top:842.3px;font-size:12px;line-height:12px;color:#3C3C3C;transform:rotate(-90deg)">6</div><div class="r" style="left:322px;top:860px;width:2px;height:1px;background:#7A7A7A"></div><div class="r" style="left:320px;top:870px;width:5px;height:1px;background:#5A5A5A"></div><div class="r" style="left:322px;top:881px;width:2px;height:1px;background:#7A7A7A"></div><div class="t" style="left:309px;width:30px;text-align:center;top:884.0px;font-size:12px;line-height:12px;color:#3C3C3C;transform:rotate(-90deg)">7</div><div class="r" style="left:322px;top:901px;width:2px;height:1px;background:#7A7A7A"></div><div class="r" style="left:320px;top:912px;width:5px;height:1px;background:#5A5A5A"></div><div class="r" style="left:322px;top:922px;width:2px;height:1px;background:#7A7A7A"></div><div class="t" style="left:309px;width:30px;text-align:center;top:925.8px;font-size:12px;line-height:12px;color:#3C3C3C;transform:rotate(-90deg)">8</div><div class="r" style="left:322px;top:943px;width:2px;height:1px;background:#7A7A7A"></div><div class="r" style="left:320px;top:954px;width:5px;height:1px;background:#5A5A5A"></div><div class="r" style="left:322px;top:964px;width:2px;height:1px;background:#7A7A7A"></div><div class="t" style="left:309px;width:30px;text-align:center;top:967.5px;font-size:12px;line-height:12px;color:#3C3C3C;transform:rotate(-90deg)">9</div><div class="r" style="left:322px;top:985px;width:2px;height:1px;background:#7A7A7A"></div><div class="r" style="left:320px;top:995px;width:5px;height:1px;background:#5A5A5A"></div>
<div class="r" style="left:321px;top:288px;width:640px;height:414px;border-radius:7px 7px 6px 6px;box-shadow:0 0 9px 2px rgba(0,0,0,0.5), 4px 6px 14px 3px rgba(0,0,0,0.6);background:#BFD9F4"></div>
<div class="r" style="left:321px;top:288px;width:640px;height:414px;border-radius:7px 7px 6px 6px;border:1px solid #1E2A36;background:linear-gradient(90deg,#C6D8EC 0%,#C4D8EE 13%,#D3E6F9 15.5%,#BFDBF7 20%,#B6D5F6 50%,#BAD8F8 80%,#CBE2F9 100%)"></div>
<div class="r" style="left:322px;top:289px;width:638px;height:412px;border-radius:6px 6px 5px 5px;border:1px solid rgba(255,255,255,0.55);"></div>
<div class="r" style="left:322px;top:696px;width:638px;height:5px;background:linear-gradient(90deg,#A8C8EA,#B4D4F4 40%,#BCDCFA);border-radius:0 0 5px 5px"></div>
<div class="t " style="left:329px;top:297px;font-size:12px;line-height:12px;color:#000;">相册</div>
<div class="r" style="left:878px;top:288px;width:29px;height:20px;border:1px solid #3A4654;border-top:none;border-radius:0 0 0 5px;background:linear-gradient(#EEF3F9 0%,#D9E3EE 45%,#A9BDD6 50%,#B4C8DE 100%)"></div>
<svg class="r" style="left:886px;top:290px;" width="14" height="16" viewBox="0 0 14 16"><path d="M3.5 5.5a3.5 3.2 0 1 1 5.5 2.6c-1.3 0.9-2 1.4-2 3" fill="none" stroke="#1C2530" stroke-width="3.1" stroke-linecap="round"/><circle cx="7" cy="13.3" r="1.7" fill="#1C2530"/><path d="M3.5 5.5a3.5 3.2 0 1 1 5.5 2.6c-1.3 0.9-2 1.4-2 3" fill="none" stroke="#fff" stroke-width="1.5" stroke-linecap="round"/><circle cx="7" cy="13.3" r="0.9" fill="#fff"/></svg>
<div class="r" style="left:906px;top:288px;width:48px;height:20px;border:1px solid #5A160D;border-top:none;border-radius:0 0 5px 0;background:linear-gradient(#EFAFA2 0%,#D9816F 45%,#C6432C 52%,#D2715A 100%)"></div>
<svg class="r" style="left:923px;top:291px;" width="16" height="14" viewBox="0 0 16 14"><path d="M3.5 2.5l8 8 M11.5 2.5l-8 8" stroke="#2A1A18" stroke-width="4" stroke-linecap="square"/><path d="M3.5 2.5l8 8 M11.5 2.5l-8 8" stroke="#fff" stroke-width="2.2" stroke-linecap="square"/></svg>
<div class="r" style="left:328px;top:317px;width:626px;height:379px;background:#F0F0F0;border:1px solid #5B6B7B"></div>
<div class="r" style="left:335px;top:330px;width:611px;height:221px;border:1px solid #D5DFE5;border-radius:3px;box-shadow:inset 1px 1px 0 #fff"></div>
<div class="r" style="left:340px;top:326px;width:56px;height:10px;background:#F0F0F0"></div>
<div class="r" style="left:344px;top:327px;width:300px;height:10px;overflow:hidden"><div class="t" style="left:0;top:1px;font-size:12px;line-height:12px;color:#000;">相册内容</div></div>
<div class="r" style="left:335px;top:561px;width:611px;height:82px;border:1px solid #D5DFE5;border-radius:3px;box-shadow:inset 1px 1px 0 #fff"></div>
<div class="r" style="left:340px;top:557px;width:56px;height:10px;background:#F0F0F0"></div>
<div class="r" style="left:344px;top:558px;width:300px;height:10px;overflow:hidden"><div class="t" style="left:0;top:1px;font-size:12px;line-height:12px;color:#000;">相册版式</div></div>
<div class="r" style="left:343px;top:344px;width:300px;height:10px;overflow:hidden"><div class="t" style="left:0;top:1px;font-size:12px;line-height:12px;color:#000;">插入图片来自:</div></div>
<div class="r" style="left:343px;top:357px;width:94px;height:21px;border:1px solid #707070;border-radius:3px;background:linear-gradient(#F2F2F2 0%,#EBEBEB 45%,#DDDDDD 50%,#CFCFCF 100%);box-shadow:inset 0 0 0 1px rgba(255,255,255,0.75);"></div>
<div class="r" style="left:352px;top:364px;width:300px;height:10px;overflow:hidden"><div class="t" style="left:0;top:1px;font-size:12px;line-height:12px;color:#000;">文件/磁盘(F)...</div></div>
<div class="r" style="left:343px;top:385px;width:300px;height:10px;overflow:hidden"><div class="t" style="left:0;top:1px;font-size:12px;line-height:12px;color:#000;">插入文本:</div></div>
<div class="r" style="left:343px;top:398px;width:94px;height:21px;border:1px solid #707070;border-radius:3px;background:linear-gradient(#F2F2F2 0%,#EBEBEB 45%,#DDDDDD 50%,#CFCFCF 100%);box-shadow:inset 0 0 0 1px rgba(255,255,255,0.75);"></div>
<div class="r" style="left:352px;top:405px;width:300px;height:10px;overflow:hidden"><div class="t" style="left:0;top:1px;font-size:12px;line-height:12px;color:#000;">新建文本框(X)</div></div>
<div class="r" style="left:343px;top:425px;width:300px;height:10px;overflow:hidden"><div class="t" style="left:0;top:1px;font-size:12px;line-height:12px;color:#000;">图片选项:</div></div>
<div class="r" style="left:342px;top:439px;width:13px;height:13px;border:1px solid #8E8F8F;background:linear-gradient(135deg,#DCDCDC,#FBFBFB);box-shadow:inset 0 0 0 2px #F4F4F4"></div>
<div class="t " style="left:362px;top:443px;font-size:12px;line-height:12px;color:#000;">标题在所有图片下面(A)</div>
<div class="r" style="left:342px;top:463px;width:13px;height:13px;border:1px solid #8E8F8F;background:linear-gradient(135deg,#DCDCDC,#FBFBFB);box-shadow:inset 0 0 0 2px #F4F4F4"></div>
<div class="t " style="left:362px;top:467px;font-size:12px;line-height:12px;color:#000;">所有图片以黑白方式显示(K)</div>
<div class="r" style="left:522px;top:344px;width:300px;height:10px;overflow:hidden"><div class="t" style="left:0;top:1px;font-size:12px;line-height:12px;color:#000;">相册中的图片(R):</div></div>
<div class="r" style="left:521px;top:356px;width:250px;height:160px;background:#fff;border:1px solid #828790"></div>
<div class="r" style="left:522px;top:497px;width:231px;height:17px;background:#DCDCE0"></div>
<div class="r" style="left:524px;top:358px;width:13px;height:1px;background:#A0A0A0"></div>
<div class="r" style="left:524px;top:363px;width:13px;height:13px;border:1px solid #8E8F8F;background:linear-gradient(135deg,#DCDCDC,#FBFBFB);box-shadow:inset 0 0 0 2px #F4F4F4"></div>
<div class="t " style="left:544px;top:366px;font-size:12px;line-height:12px;color:#000;font-family:"Liberation Sans",sans-serif">3</div>
<div class="t " style="left:565px;top:365px;font-size:12px;line-height:12px;color:#000;">4</div>
<div class="r" style="left:524px;top:380px;width:13px;height:13px;border:1px solid #8E8F8F;background:linear-gradient(135deg,#DCDCDC,#FBFBFB);box-shadow:inset 0 0 0 2px #F4F4F4"></div>
<div class="t " style="left:565px;top:382px;font-size:12px;line-height:12px;color:#000;">5</div>
<div class="r" style="left:524px;top:397px;width:13px;height:13px;border:1px solid #8E8F8F;background:linear-gradient(135deg,#DCDCDC,#FBFBFB);box-shadow:inset 0 0 0 2px #F4F4F4"></div>
<div class="t " style="left:544px;top:400px;font-size:12px;line-height:12px;color:#000;font-family:"Liberation Sans",sans-serif">4</div>
<div class="t " style="left:565px;top:399px;font-size:12px;line-height:12px;color:#000;">6</div>
<div class="r" style="left:524px;top:414px;width:13px;height:13px;border:1px solid #8E8F8F;background:linear-gradient(135deg,#DCDCDC,#FBFBFB);box-shadow:inset 0 0 0 2px #F4F4F4"></div>
<div class="t " style="left:565px;top:416px;font-size:12px;line-height:12px;color:#000;">7</div>
<div class="r" style="left:524px;top:431px;width:13px;height:13px;border:1px solid #8E8F8F;background:linear-gradient(135deg,#DCDCDC,#FBFBFB);box-shadow:inset 0 0 0 2px #F4F4F4"></div>
<div class="t " style="left:544px;top:434px;font-size:12px;line-height:12px;color:#000;font-family:"Liberation Sans",sans-serif">5</div>
<div class="t " style="left:565px;top:433px;font-size:12px;line-height:12px;color:#000;">8</div>
<div class="r" style="left:524px;top:448px;width:13px;height:13px;border:1px solid #8E8F8F;background:linear-gradient(135deg,#DCDCDC,#FBFBFB);box-shadow:inset 0 0 0 2px #F4F4F4"></div>
<div class="t " style="left:565px;top:450px;font-size:12px;line-height:12px;color:#000;">9</div>
<div class="r" style="left:524px;top:465px;width:13px;height:13px;border:1px solid #8E8F8F;background:linear-gradient(135deg,#DCDCDC,#FBFBFB);box-shadow:inset 0 0 0 2px #F4F4F4"></div>
<div class="t " style="left:544px;top:468px;font-size:12px;line-height:12px;color:#000;font-family:"Liberation Sans",sans-serif">6</div>
<div class="t " style="left:565px;top:467px;font-size:12px;line-height:12px;color:#000;">10</div>
<div class="r" style="left:524px;top:482px;width:13px;height:13px;border:1px solid #8E8F8F;background:linear-gradient(135deg,#DCDCDC,#FBFBFB);box-shadow:inset 0 0 0 2px #F4F4F4"></div>
<div class="t " style="left:565px;top:484px;font-size:12px;line-height:12px;color:#000;">11</div>
<div class="r" style="left:524px;top:499px;width:13px;height:13px;border:1px solid #8E8F8F;background:linear-gradient(135deg,#DCDCDC,#FBFBFB);box-shadow:inset 0 0 0 2px #F4F4F4"></div>
<div class="t " style="left:544px;top:502px;font-size:12px;line-height:12px;color:#000;font-family:"Liberation Sans",sans-serif">7</div>
<div class="t " style="left:565px;top:501px;font-size:12px;line-height:12px;color:#000;">12</div>
<div class="r" style="left:753px;top:357px;width:17px;height:158px;background:linear-gradient(90deg,#E8E8E8,#F6F6F6 30%,#F6F6F6 70%,#EAEAEA)"></div>
<svg class="r" style="left:757px;top:363px;" width="9" height="6" viewBox="0 0 9 6"><path d="M0.5 5l4-4 4 4z" fill="#222"/></svg>
<svg class="r" style="left:757px;top:502px;" width="9" height="6" viewBox="0 0 9 6"><path d="M0.5 1l4 4 4-4z" fill="#222"/></svg>
<div class="r" style="left:754px;top:412px;width:15px;height:84px;border:1px solid #979797;border-radius:2px;background:linear-gradient(90deg,#EDEDED,#E2E2E2 45%,#D3D3D3 55%,#C9C9C9)"></div>
<div class="r" style="left:758px;top:450px;width:7px;height:1px;background:#555"></div>
<div class="r" style="left:758px;top:452px;width:7px;height:1px;background:#555"></div>
<div class="r" style="left:758px;top:454px;width:7px;height:1px;background:#555"></div>
<div class="r" style="left:758px;top:456px;width:7px;height:1px;background:#555"></div>
<div class="r" style="left:522px;top:520px;width:24px;height:23px;border:1px solid #707070;border-radius:3px;background:linear-gradient(#F2F2F2 0%,#EBEBEB 45%,#DDDDDD 50%,#CFCFCF 100%);box-shadow:inset 0 0 0 1px rgba(255,255,255,0.75);"></div>
<svg class="r" style="left:528px;top:524px;" width="12" height="14" viewBox="0 0 12 14"><path d="M6 12V2 M2 6l4-4 4 4" fill="none" stroke="#B4B4B4" stroke-width="1.8"/></svg>
<div class="r" style="left:548px;top:520px;width:24px;height:23px;border:1px solid #707070;border-radius:3px;background:linear-gradient(#F2F2F2 0%,#EBEBEB 45%,#DDDDDD 50%,#CFCFCF 100%);box-shadow:inset 0 0 0 1px rgba(255,255,255,0.75);"></div>
<svg class="r" style="left:554px;top:525px;" width="12" height="14" viewBox="0 0 12 14"><path d="M6 1v10 M2 7l4 4 4-4" fill="none" stroke="#B4B4B4" stroke-width="1.8"/></svg>
<div class="r" style="left:574px;top:520px;width:76px;height:23px;border:1px solid #707070;border-radius:3px;background:linear-gradient(#F2F2F2 0%,#EBEBEB 45%,#DDDDDD 50%,#CFCFCF 100%);box-shadow:inset 0 0 0 1px rgba(255,255,255,0.75);"></div>
<svg class="r" style="left:581px;top:524px;" width="16" height="15" viewBox="0 0 16 15"><path d="M2 1l12 13 M14 1l-12 13" stroke="#B0B0B0" stroke-width="1.8"/></svg>
<div class="r" style="left:601px;top:527px;width:300px;height:10px;overflow:hidden"><div class="t" style="left:0;top:1px;font-size:12px;line-height:12px;color:#9A9A9A;">删除(V)</div></div>
<div class="r" style="left:780px;top:343px;width:300px;height:10px;overflow:hidden"><div class="t" style="left:0;top:1px;font-size:12px;line-height:12px;color:#000;">预览:</div></div>
<div class="r" style="left:780px;top:356px;width:161px;height:160px;background:#F0F0F0;border:1px solid #707070"></div>
<svg class="r" style="left:816px;top:357px" width="90" height="158" viewBox="0 0 90 158">
<defs><filter id="bl" x="-30%" y="-30%" width="160%" height="160%"><feGaussianBlur stdDeviation="2.6"/></filter>
<filter id="bl2" x="-30%" y="-30%" width="160%" height="160%"><feGaussianBlur stdDeviation="1.3"/></filter>
<clipPath id="pc"><rect width="90" height="158"/></clipPath></defs>
<g clip-path="url(#pc)">
<rect width="90" height="158" fill="#6A8A9C"/>
<g filter="url(#bl)">
<ellipse cx="18" cy="10" rx="26" ry="12" fill="#A59C9E"/>
<ellipse cx="70" cy="16" rx="24" ry="20" fill="#3B5E9C"/>
<ellipse cx="86" cy="55" rx="9" ry="24" fill="#4C7AAA"/>
<ellipse cx="10" cy="42" rx="14" ry="18" fill="#8C8488"/>
<ellipse cx="26" cy="28" rx="8" ry="6" fill="#CDAEA4"/>
<ellipse cx="57" cy="47" rx="25" ry="22" fill="#E9D9A8"/>
<ellipse cx="43" cy="55" rx="13" ry="10" fill="#DDB5A3"/>
<ellipse cx="64" cy="36" rx="13" ry="12" fill="#F2E7B0"/>
<ellipse cx="20" cy="64" rx="18" ry="7" fill="#7E8C8E"/>
<ellipse cx="22" cy="84" rx="26" ry="9" transform="rotate(18 22 84)" fill="#E4CCA0"/>
<ellipse cx="72" cy="76" rx="18" ry="7" fill="#D2CDAA"/>
<ellipse cx="55" cy="89" rx="26" ry="5" fill="#7DB4AE"/>
<ellipse cx="48" cy="102" rx="34" ry="6" transform="rotate(8 48 102)" fill="#DDCB9F"/>
<ellipse cx="82" cy="106" rx="10" ry="6" fill="#D7B7AA"/>
<ellipse cx="40" cy="116" rx="40" ry="5" fill="#52708A"/>
<ellipse cx="34" cy="128" rx="26" ry="6" transform="rotate(12 34 128)" fill="#D9C99E"/>
<ellipse cx="70" cy="138" rx="16" ry="5" fill="#A8B8A8"/>
<ellipse cx="45" cy="153" rx="50" ry="8" fill="#3A6A7C"/>
<ellipse cx="86" cy="128" rx="7" ry="8" fill="#D4A9A2"/>
</g>
<g filter="url(#bl2)">
<ellipse cx="62" cy="40" rx="10" ry="10" fill="#F6EDBA"/>
<ellipse cx="22" cy="96" rx="14" ry="3" transform="rotate(18 22 96)" fill="#EEDDB0"/>
<ellipse cx="32" cy="126" rx="12" ry="2.5" transform="rotate(12 32 126)" fill="#EBDDAE"/>
</g>
<filter id="tx" x="0" y="0" width="100%" height="100%"><feTurbulence type="fractalNoise" baseFrequency="0.12 0.2" numOctaves="3" seed="7"/><feColorMatrix type="matrix" values="0 0 0 0 1  0 0 0 0 0.97  0 0 0 0 0.85  0 0 0 1.6 -0.75"/></filter>
<rect width="90" height="158" filter="url(#tx)" opacity="0.3"/>
<filter id="tx2" x="0" y="0" width="100%" height="100%"><feTurbulence type="fractalNoise" baseFrequency="0.1 0.16" numOctaves="2" seed="3"/><feColorMatrix type="matrix" values="0 0 0 0 0.2  0 0 0 0 0.35  0 0 0 0 0.5  0 0 0 1.8 -1.0"/></filter>
<rect width="90" height="158" filter="url(#tx2)" opacity="0.2"/>
<circle cx="8" cy="148" r="1.5" fill="#fff" opacity="0.8"/><circle cx="20" cy="154" r="1.5" fill="#fff" opacity="0.7"/>
<circle cx="80" cy="145" r="1.2" fill="#fff" opacity="0.8"/><circle cx="14" cy="108" r="1" fill="#fff" opacity="0.7"/>
<circle cx="75" cy="135" r="1" fill="#fff" opacity="0.7"/><circle cx="40" cy="20" r="0.8" fill="#fff" opacity="0.6"/>
<path d="M53 158l2-8a3 3 0 0 1 6 0l1 8z" fill="#1F3440"/><circle cx="58" cy="146" r="2.2" fill="#1F3440"/>
<path d="M56 145c-3-1-5 1-6 4" fill="none" stroke="#1F3440" stroke-width="0.8"/>
</g></svg>
<div class="r" style="left:781px;top:520px;width:24px;height:23px;border:1px solid #707070;border-radius:3px;background:linear-gradient(#F2F2F2 0%,#EBEBEB 45%,#DDDDDD 50%,#CFCFCF 100%);box-shadow:inset 0 0 0 1px rgba(255,255,255,0.75);"></div>
<div class="r" style="left:807px;top:520px;width:24px;height:23px;border:1px solid #707070;border-radius:3px;background:linear-gradient(#F2F2F2 0%,#EBEBEB 45%,#DDDDDD 50%,#CFCFCF 100%);box-shadow:inset 0 0 0 1px rgba(255,255,255,0.75);"></div>
<div class="r" style="left:835px;top:520px;width:24px;height:23px;border:1px solid #707070;border-radius:3px;background:linear-gradient(#F2F2F2 0%,#EBEBEB 45%,#DDDDDD 50%,#CFCFCF 100%);box-shadow:inset 0 0 0 1px rgba(255,255,255,0.75);"></div>
<div class="r" style="left:861px;top:520px;width:24px;height:23px;border:1px solid #707070;border-radius:3px;background:linear-gradient(#F2F2F2 0%,#EBEBEB 45%,#DDDDDD 50%,#CFCFCF 100%);box-shadow:inset 0 0 0 1px rgba(255,255,255,0.75);"></div>
<div class="r" style="left:889px;top:520px;width:24px;height:23px;border:1px solid #707070;border-radius:3px;background:linear-gradient(#F2F2F2 0%,#EBEBEB 45%,#DDDDDD 50%,#CFCFCF 100%);box-shadow:inset 0 0 0 1px rgba(255,255,255,0.75);"></div>
<div class="r" style="left:915px;top:520px;width:24px;height:23px;border:1px solid #707070;border-radius:3px;background:linear-gradient(#F2F2F2 0%,#EBEBEB 45%,#DDDDDD 50%,#CFCFCF 100%);box-shadow:inset 0 0 0 1px rgba(255,255,255,0.75);"></div>
<svg class="r" style="left:784px;top:524px;" width="18" height="15" viewBox="0 0 18 15"><path d="M2 13l6-11v11z" fill="#BDBDBD"/><path d="M9 13l7-5v5z" fill="#fff" stroke="#BDBDBD" stroke-width="0.8"/><path d="M10 6a3 3 0 0 1 5 0 M10 3v3h3" fill="none" stroke="#A0A0A0" stroke-width="1"/></svg>
<svg class="r" style="left:810px;top:524px;" width="18" height="15" viewBox="0 0 18 15"><path d="M16 13l-6-11v11z" fill="#BDBDBD"/><path d="M9 13l-7-5v5z" fill="#fff" stroke="#BDBDBD" stroke-width="0.8"/><path d="M8 6a3 3 0 0 0 -5 0 M8 3v3h-3" fill="none" stroke="#A0A0A0" stroke-width="1"/></svg>
<svg class="r" style="left:838px;top:524px;" width="18" height="15" viewBox="0 0 18 15"><path d="M8 1a6.5 6.5 0 0 0 0 13z" fill="#fff" stroke="#B5B5B5" stroke-width="1.1"/><path d="M8 1a6.5 6.5 0 0 1 0 13z" fill="#C8C8C8"/><path d="M13 13V2 M11 5l2-3 2 3 M16 13V3" fill="none" stroke="#A8A8A8" stroke-width="1"/></svg>
<svg class="r" style="left:864px;top:524px;" width="18" height="15" viewBox="0 0 18 15"><path d="M8 1a6.5 6.5 0 0 0 0 13z" fill="#fff" stroke="#B5B5B5" stroke-width="1.1"/><path d="M8 1a6.5 6.5 0 0 1 0 13z" fill="#C8C8C8"/><path d="M13 2v11 M11 10l2 3 2-3 M16 2v10" fill="none" stroke="#A8A8A8" stroke-width="1"/></svg>
<svg class="r" style="left:892px;top:524px;" width="18" height="15" viewBox="0 0 18 15"><path d="M2 13a6 6 0 0 1 12 0z" fill="#D9D9D9"/><path d="M3 4h1 M8 2v1 M12 4h1" stroke="#CFCFCF" stroke-width="1.2"/><path d="M12 14V2 M9.5 5l2.5-3 2.5 3" fill="none" stroke="#A0A0A0" stroke-width="1"/></svg>
<svg class="r" style="left:918px;top:524px;" width="18" height="15" viewBox="0 0 18 15"><path d="M2 13a6 6 0 0 1 12 0z" fill="#D9D9D9"/><path d="M3 4h1 M8 2v1 M12 4h1" stroke="#CFCFCF" stroke-width="1.2"/><path d="M12 1v12 M9.5 10l2.5 3 2.5-3" fill="none" stroke="#A0A0A0" stroke-width="1"/></svg>
<div class="t " style="left:343px;top:576px;font-size:12px;line-height:12px;color:#000;">图片版式(P):</div>
<div class="t " style="left:343px;top:597px;font-size:12px;line-height:12px;color:#000;">相框形状(M):</div>
<div class="t " style="left:343px;top:618px;font-size:12px;line-height:12px;color:#000;">主题(T):</div>
<div class="r" style="left:424px;top:572px;width:330px;height:18px;background:#fff;border:1px solid #A3A3A3;box-shadow:inset 0 0 0 1px #E2E2E2"></div>
<div class="r" style="left:734px;top:573px;width:19px;height:16px;border:1px solid #8A8A8A;background:linear-gradient(#F6F6F6 0%,#EEEEEE 45%,#DADADA 55%,#D2D2D2 100%)"></div>
<svg class="r" style="left:738px;top:578px;" width="11" height="7" viewBox="0 0 11 7"><path d="M0.5 0.5h10l-5 6z" fill="#000"/></svg>
<div class="r" style="left:424px;top:593px;width:330px;height:18px;background:#fff;border:1px solid #A3A3A3;box-shadow:inset 0 0 0 1px #E2E2E2"></div>
<div class="r" style="left:734px;top:594px;width:19px;height:16px;border:1px solid #8A8A8A;background:linear-gradient(#F6F6F6 0%,#EEEEEE 45%,#DADADA 55%,#D2D2D2 100%)"></div>
<svg class="r" style="left:738px;top:599px;" width="11" height="7" viewBox="0 0 11 7"><path d="M0.5 0.5h10l-5 6z" fill="#000"/></svg>
<div class="r" style="left:427px;top:577px;width:300px;height:10px;overflow:hidden"><div class="t" style="left:0;top:1px;font-size:12px;line-height:12px;color:#000;">2 张图片</div></div>
<div class="r" style="left:427px;top:598px;width:300px;height:10px;overflow:hidden"><div class="t" style="left:0;top:1px;font-size:12px;line-height:12px;color:#000;">柔化边缘矩形</div></div>
<div class="r" style="left:424px;top:614px;width:246px;height:18px;background:#fff;border:1px solid #B8B8B8"></div>
<div class="r" style="left:426px;top:618px;width:243px;height:13px;overflow:hidden"><div class="t" style="left:1px;top:1px;font-size:13px;line-height:13px;letter-spacing:0.15px;color:#000">C:\Program Files\Microsoft Office\root\Document Themes</div></div>
<div class="r" style="left:680px;top:615px;width:73px;height:21px;border:1px solid #3C8FCC;border-radius:3px;background:linear-gradient(#F2F2F2 0%,#EBEBEB 45%,#DDDDDD 50%,#CFCFCF 100%);box-shadow:inset 0 0 0 1px #8ED3F5"></div>
<div class="r" style="left:683px;top:618px;width:67px;height:15px;border:1px dotted #222"></div>
<div class="r" style="left:692px;top:622px;width:300px;height:10px;overflow:hidden"><div class="t" style="left:0;top:1px;font-size:12px;line-height:12px;color:#000;">浏览(B)...</div></div>
<div class="r" style="left:812px;top:573px;width:78px;height:62px;background:#fff"></div>
<svg class="r" style="left:820px;top:594px;filter:drop-shadow(0 0 1px rgba(40,90,140,0.6))" width="27" height="21" viewBox="0 0 27 21"><defs><linearGradient id="sk820" x1="0" y1="0" x2="0" y2="1"><stop offset="0" stop-color="#2F7FD0"/><stop offset="0.55" stop-color="#9FD0F2"/><stop offset="1" stop-color="#DDEFF8"/></linearGradient></defs><rect x="0.5" y="0.5" width="26" height="20" rx="2" fill="url(#sk820)"/><path d="M6 5c2-2 4-1 5 0c2-1 4 0 4 1h-9z" fill="#fff" opacity="0.8"/><path d="M0.5 14c4-3 8-5 13-4s9 1 13 0v5h-26z" fill="#2F7A5A"/><rect x="0.5" y="14.5" width="26" height="6" rx="1.5" fill="#2A6C9C"/></svg>
<svg class="r" style="left:856px;top:594px;filter:drop-shadow(0 0 1px rgba(40,90,140,0.6))" width="27" height="21" viewBox="0 0 27 21"><defs><linearGradient id="sk856" x1="0" y1="0" x2="0" y2="1"><stop offset="0" stop-color="#2F7FD0"/><stop offset="0.55" stop-color="#9FD0F2"/><stop offset="1" stop-color="#DDEFF8"/></linearGradient></defs><rect x="0.5" y="0.5" width="26" height="20" rx="2" fill="url(#sk856)"/><path d="M6 5c2-2 4-1 5 0c2-1 4 0 4 1h-9z" fill="#fff" opacity="0.8"/><path d="M0.5 14c4-3 8-5 13-4s9 1 13 0v5h-26z" fill="#2F7A5A"/><rect x="0.5" y="14.5" width="26" height="6" rx="1.5" fill="#2A6C9C"/></svg>
<div class="r" style="left:789px;top:665px;width:73px;height:21px;border:1px solid #707070;border-radius:3px;background:linear-gradient(#F2F2F2 0%,#EBEBEB 45%,#DDDDDD 50%,#CFCFCF 100%);box-shadow:inset 0 0 0 1px rgba(255,255,255,0.75);"></div>
<div class="r" style="left:804px;top:671px;width:300px;height:11px;overflow:hidden"><div class="t" style="left:0;top:1px;font-size:12px;line-height:12px;color:#000;">创建(C)</div></div>
<div class="r" style="left:873px;top:663px;width:73px;height:25px;border:1px solid #707070;border-radius:3px;background:linear-gradient(#F2F2F2 0%,#EBEBEB 45%,#DDDDDD 50%,#CFCFCF 100%);box-shadow:inset 0 0 0 1px rgba(255,255,255,0.75);"></div>
<div class="t " style="left:897px;top:672px;font-size:12px;line-height:12px;color:#000;">取消</div>
</body></html>
